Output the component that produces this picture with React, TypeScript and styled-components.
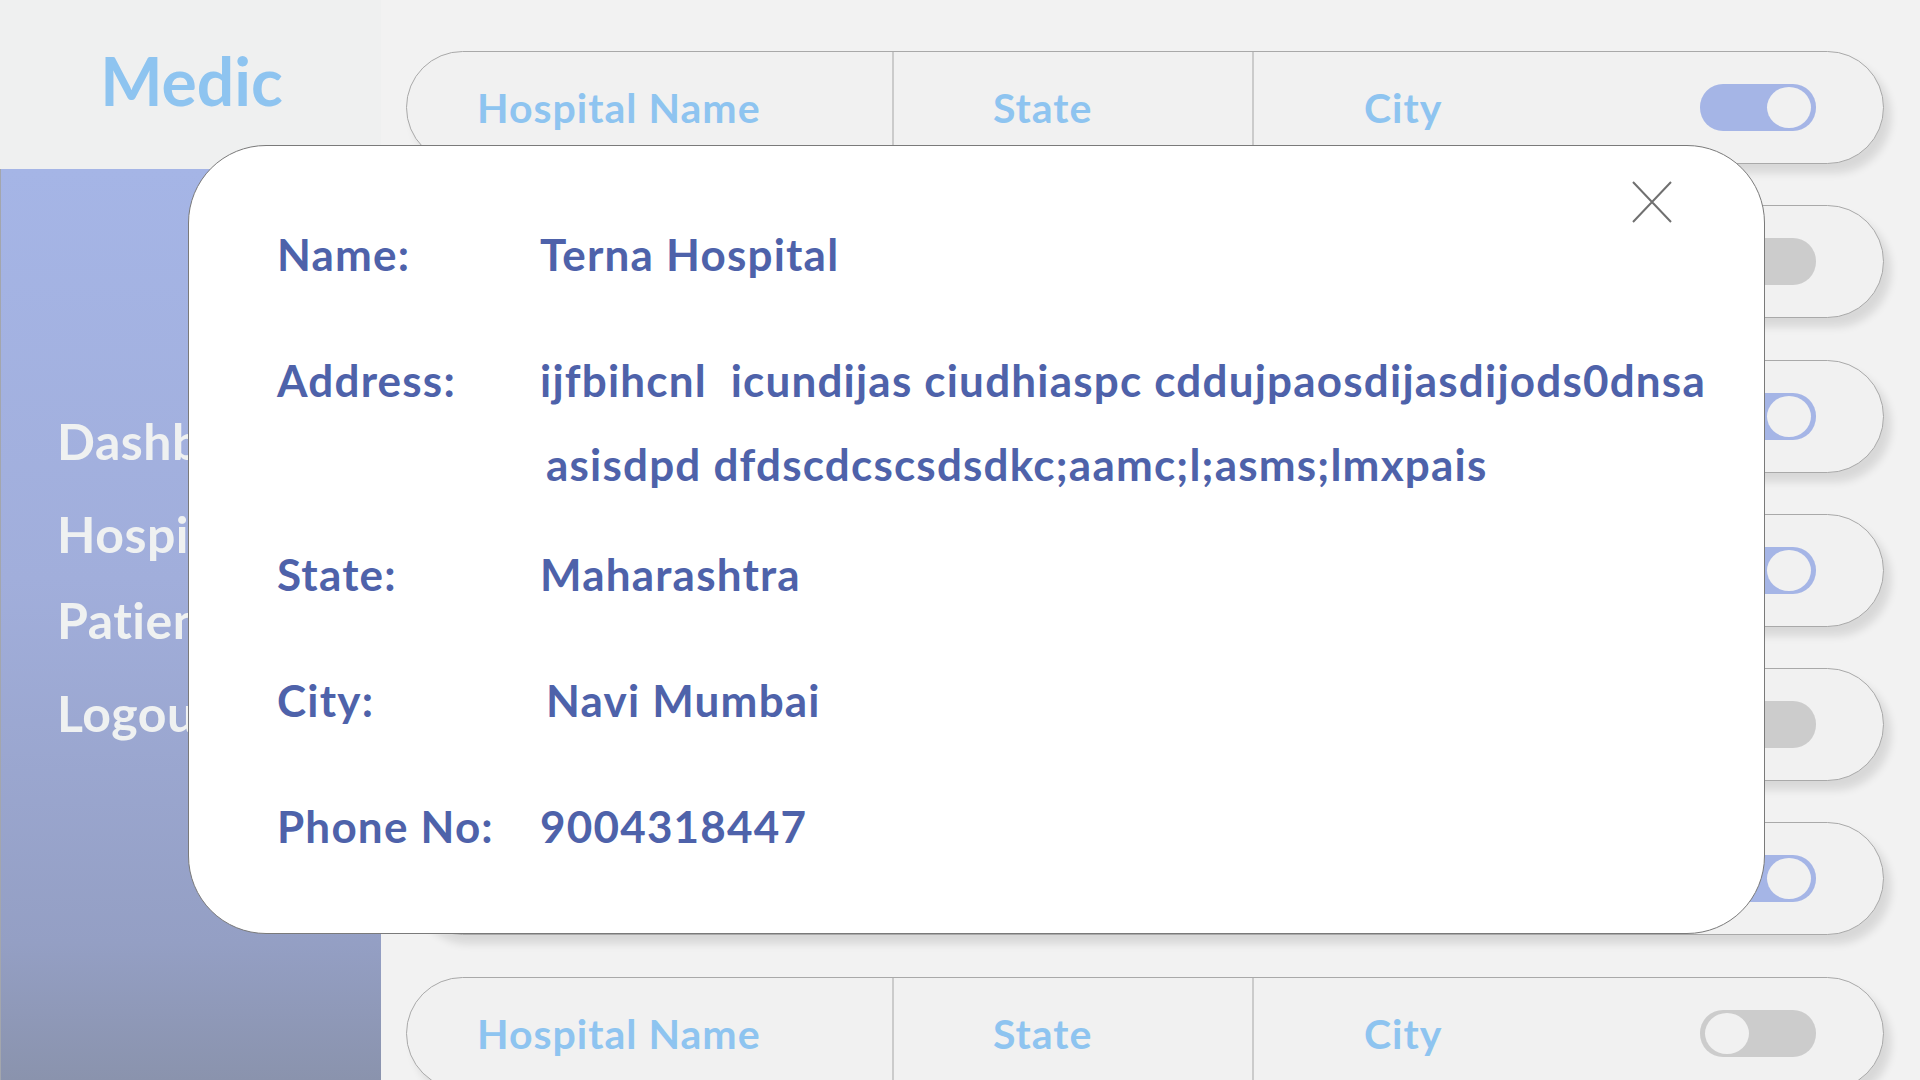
import React from "react";
import styled, { createGlobalStyle } from "styled-components";

const GlobalStyle = createGlobalStyle`
  html, body {
    margin: 0;
    padding: 0;
    width: 100%;
    height: 100%;
    background: #f2f2f2;
    font-family: Lato, "Open Sans", sans-serif;
    overflow: hidden;
  }
  * { box-sizing: border-box; }
`;

const Page = styled.div`
  display: flex;
  width: 1920px;
  height: 1080px;
  background: #f2f2f2;
  position: relative;
  overflow: hidden;
`;

const Sidebar = styled.aside`
  width: 381px;
  flex-shrink: 0;
  display: flex;
  flex-direction: column;
`;

const Brand = styled.div`
  height: 169px;
  background: #eff0f0;
  padding-top: 41px;
  padding-left: 2px;
  text-align: center;
  font-size: 66px;
  font-weight: 700;
  line-height: 1.2;
  color: #8ec4f0;
`;

const Nav = styled.nav`
  flex: 1;
  display: flex;
  flex-direction: column;
  border-left: 1px solid #a3a6ad;
  background: linear-gradient(
    180deg,
    #a5b5e6 0%,
    #a1aedb 45%,
    #949fc4 85%,
    #8a93ad 100%
  );
`;

const NavItem = styled.a<{ $mt: number }>`
  display: block;
  margin-top: ${(p) => p.$mt}px;
  padding-left: 56px;
  font-size: 50px;
  line-height: 60px;
  font-weight: 700;
  letter-spacing: 0.5px;
  color: #eff1f1;
  text-decoration: none;
  white-space: nowrap;
`;

const Main = styled.main`
  flex: 1;
  display: flex;
  flex-direction: column;
  gap: 41.3px;
  padding: 51px 36px 0 25px;
`;

const Row = styled.div`
  height: 113px;
  flex-shrink: 0;
  display: flex;
  align-items: stretch;
  background: #f1f1f1;
  border: 1px solid #a9a9a9;
  border-radius: 60px;
  box-shadow: 7px 9px 9px rgba(0, 0, 0, 0.11);
`;

const Cell = styled.div<{ $w?: number; $pl: number; $divider?: boolean }>`
  ${(p) => (p.$w ? `width: ${p.$w}px; flex-shrink: 0;` : "flex: 1;")}
  display: flex;
  align-items: center;
  padding-left: ${(p) => p.$pl}px;
  border-right: ${(p) => (p.$divider ? "2px solid #cbcbcb" : "none")};
  font-size: 41px;
  font-weight: 700;
  letter-spacing: 1px;
  color: #8ec4f0;
  white-space: nowrap;
`;

const ToggleCell = styled.div`
  display: flex;
  align-items: center;
  padding-right: 67px;
`;

const Toggle = styled.div<{ $on: boolean }>`
  width: 116px;
  height: 47px;
  border-radius: 23px;
  background: ${(p) => (p.$on ? "#a5b5e6" : "#cccccc")};
  display: flex;
  align-items: center;
  justify-content: ${(p) => (p.$on ? "flex-end" : "flex-start")};
  padding: 0 5px;
`;

const Knob = styled.div`
  width: 44px;
  height: 41px;
  border-radius: 50%;
  background: #f1f1f1;
`;

const Modal = styled.div`
  position: absolute;
  left: 188px;
  top: 145px;
  width: 1577px;
  height: 789px;
  background: #ffffff;
  border: 1px solid #7a7a7a;
  border-radius: 78px;
  padding: 66px 0 0 88px;
  display: flex;
  flex-direction: column;
  gap: 42px;
`;

const CloseButton = styled.button`
  position: absolute;
  left: 1443px;
  top: 35px;
  width: 40px;
  height: 42px;
  padding: 0;
  border: none;
  background: transparent;
  cursor: pointer;
  display: flex;
`;

const InfoRow = styled.div<{ $after?: number }>`
  display: flex;
  margin-bottom: ${(p) => p.$after ?? 0}px;
`;

const Label = styled.div`
  width: 255px;
  margin-right: 8px;
  flex-shrink: 0;
  font-size: 44px;
  line-height: 84px;
  font-weight: 700;
  letter-spacing: 1.2px;
  color: #4e62aa;
  white-space: nowrap;
`;

const Value = styled.div`
  display: flex;
  flex-direction: column;
  font-size: 44px;
  line-height: 84px;
  font-weight: 700;
  letter-spacing: 1.2px;
  color: #4e62aa;
`;

const ValueLine = styled.span<{ $indent?: number }>`
  display: block;
  padding-left: ${(p) => p.$indent ?? 0}px;
  white-space: pre;
`;

const rows = [true, false, true, true, false, true, false];

export default function App() {
  return (
    <>
      <GlobalStyle />
      <Page>
        <Sidebar>
          <Brand>Medic</Brand>
          <Nav>
            <NavItem $mt={242}>Dashboard</NavItem>
            <NavItem $mt={33}>Hospitals</NavItem>
            <NavItem $mt={26}>Patients</NavItem>
            <NavItem $mt={33}>Logout</NavItem>
          </Nav>
        </Sidebar>
        <Main>
          {rows.map((on, i) => (
            <Row key={i}>
              <Cell $w={487} $pl={70} $divider>
                Hospital Name
              </Cell>
              <Cell $w={360} $pl={99} $divider>
                State
              </Cell>
              <Cell $pl={110}>City</Cell>
              <ToggleCell>
                <Toggle $on={on}>
                  <Knob />
                </Toggle>
              </ToggleCell>
            </Row>
          ))}
        </Main>
        <Modal>
          <CloseButton aria-label="Close">
            <svg width="40" height="42" viewBox="0 0 40 42">
              <path
                d="M1 1 L39 41 M39 1 L1 41"
                stroke="#707070"
                strokeWidth="2"
                fill="none"
              />
            </svg>
          </CloseButton>
          <InfoRow>
            <Label>Name:</Label>
            <Value>
              <ValueLine>Terna Hospital</ValueLine>
            </Value>
          </InfoRow>
          <InfoRow $after={-16}>
            <Label>Address:</Label>
            <Value>
              <ValueLine>ijfbihcnl  icundijas ciudhiaspc cddujpaosdijasdijods0dnsa</ValueLine>
              <ValueLine $indent={6}>asisdpd dfdscdcscsdsdkc;aamc;l;asms;lmxpais</ValueLine>
            </Value>
          </InfoRow>
          <InfoRow>
            <Label>State:</Label>
            <Value>
              <ValueLine>Maharashtra</ValueLine>
            </Value>
          </InfoRow>
          <InfoRow>
            <Label>City:</Label>
            <Value>
              <ValueLine $indent={6}>Navi Mumbai</ValueLine>
            </Value>
          </InfoRow>
          <InfoRow>
            <Label>Phone No:</Label>
            <Value>
              <ValueLine>9004318447</ValueLine>
            </Value>
          </InfoRow>
        </Modal>
      </Page>
    </>
  );
}
